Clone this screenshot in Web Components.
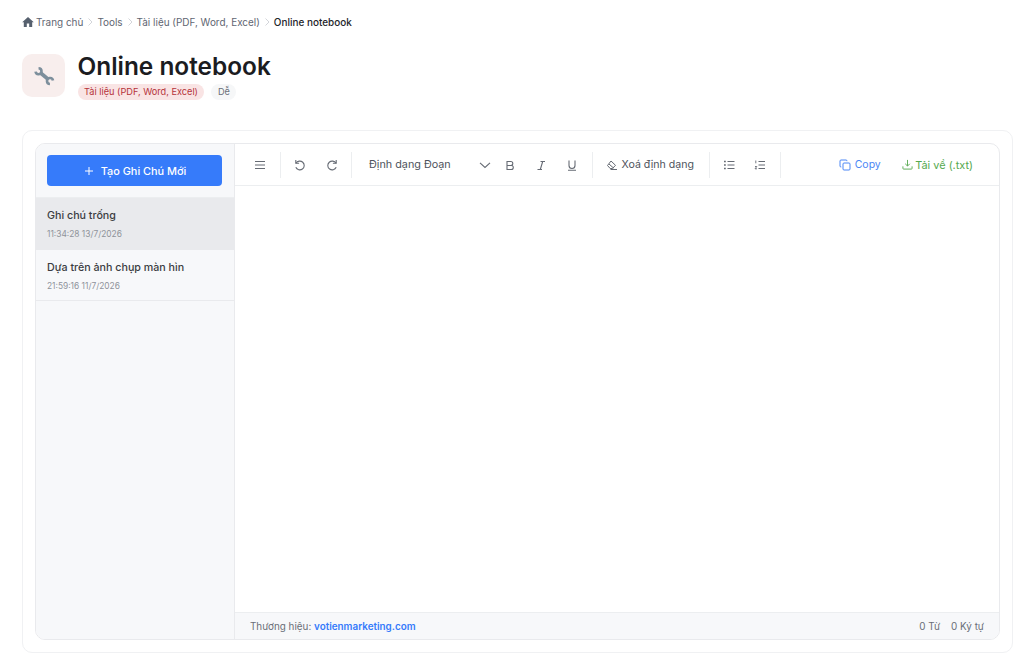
<!DOCTYPE html>
<html lang="vi">
<head>
<meta charset="utf-8">
<title>Online notebook</title>
<style>
  html, body { margin: 0; background: #fff; }
  body { font-family: Inter, "Liberation Sans", sans-serif; color: #1f2023; height: 665px; overflow: hidden; }
</style>
</head>
<body>
<tool-page>
  <bread-crumbs slot="crumbs"></bread-crumbs>
  <tool-title slot="title" name="Online notebook" category="Tài liệu (PDF, Word, Excel)" level="Dễ"></tool-title>
  <note-app slot="app">
    <note-sidebar slot="side">
      <note-item active title="Ghi chú trống" time="11:34:28 13/7/2026"></note-item>
      <note-item title="Dựa trên ảnh chụp màn hìn" time="21:59:16 11/7/2026"></note-item>
    </note-sidebar>
    <editor-toolbar slot="bar"></editor-toolbar>
    <editor-footer slot="foot"></editor-footer>
  </note-app>
</tool-page>

<script>
class ToolPage extends HTMLElement {
    constructor() {
        super();
        this.attachShadow({ mode: "open" });
        this.shadowRoot.innerHTML = `
        <style>
            :host { display: flex; flex-direction: column; padding: 0 11px 0 22px; }
            .crumbs { height: 44px; display: flex; align-items: center; }
            .title { height: 86px; }
            .card { border: 1px solid #f0f1f3; border-radius: 10px; padding: 12px; height: 497px; }
        </style>
        <div class="crumbs"><slot name="crumbs"></slot></div>
        <div class="title"><slot name="title"></slot></div>
        <div class="card"><slot name="app"></slot></div>
        `;
    }
}

class BreadCrumbs extends HTMLElement {
    constructor() {
        super();
        this.attachShadow({ mode: "open" });
        const chev = `<svg class="chev" width="12" height="12" viewBox="0 0 12 12" fill="none" stroke="#d3d5da" stroke-width="1"><path d="M4.500 2.500 8 6l-3.500 3.500"/></svg>`;
        this.shadowRoot.innerHTML = `
        <style>
            :host { display: flex; align-items: center; font-size: 9.950px; color: #5f6672; white-space: nowrap; }
            svg { display: block; flex: none; }
            .home { margin-right: 2px; }
            .chev { margin: 0 1px; }
            b { font-weight: 500; color: #23252a; }
        </style>
        <svg class="home" width="12" height="12" viewBox="0 0 12 12" fill="#56606e"><path d="M6 .9.2 6.200h1.600V11h3V7.600h2.400V11h3V6.200h1.600z"/></svg>
        <span>Trang chủ</span>${chev}<span>Tools</span>${chev}<span>Tài liệu (PDF, Word, Excel)</span>${chev}<b>Online notebook</b>
        `;
    }
}

class ToolTitle extends HTMLElement {
    constructor() {
        super();
        this.attachShadow({ mode: "open" });
        this.shadowRoot.innerHTML = `
        <style>
            :host { display: flex; gap: 12.500px; padding-top: 10px; }
            .icon { width: 43px; height: 43px; border-radius: 10px; background: #f8eeed; display: flex; align-items: center; justify-content: center; }
            h1 { margin: 0; font-size: 24.400px; line-height: 28px; font-weight: 600; color: #1b1c1f; margin-top: -2px; }
            .tags { display: flex; gap: 7px; margin-top: 4px; }
            .tag { font-size: 9.200px; line-height: 16px; padding: 0 6.500px; border-radius: 8px; }
            .cat { background: #f9e4e4; color: #b5333a; }
            .lvl { background: #f6f7f8; color: #6a6f78; }
        </style>
        <div class="icon">
            <svg width="22" height="22" viewBox="0 0 22 22" fill="none" stroke="#7d8f9c">
                <path d="M7 7.500 15.500 14.500" stroke-width="3.600"/>
                <path d="M5.550 3.200A3 3 0 1 1 2.540 6.670" stroke-width="2.600"/>
                <path d="M16.950 19A3 3 0 1 1 19.960 15.530" stroke-width="2.600"/>
            </svg>
        </div>
        <div>
            <h1>${this.getAttribute("name")}</h1>
            <div class="tags">
                <span class="tag cat">${this.getAttribute("category")}</span>
                <span class="tag lvl">${this.getAttribute("level")}</span>
            </div>
        </div>
        `;
    }
}

class NoteApp extends HTMLElement {
    constructor() {
        super();
        this.attachShadow({ mode: "open" });
        this.shadowRoot.innerHTML = `
        <style>
            :host { display: grid; grid-template-columns: 199px 1fr; grid-template-rows: 42px 1fr 27px; height: 497px; box-sizing: border-box; border: 1px solid #e9eaed; border-radius: 10px; overflow: hidden; }
            .side { grid-row: 1 / 4; background: #f7f8fa; border-right: 1px solid #e9eaed; min-height: 0; }
            .bar { border-bottom: 1px solid #eceef0; min-width: 0; }
        </style>
        <div class="side"><slot name="side"></slot></div>
        <div class="bar"><slot name="bar"></slot></div>
        <div></div>
        <div><slot name="foot"></slot></div>
        `;
    }
}

class NoteSidebar extends HTMLElement {
    constructor() {
        super();
        this.attachShadow({ mode: "open" });
        this.shadowRoot.innerHTML = `
        <style>
            :host { display: block; }
            .top { padding: 11px 12px 11px 11px; border-bottom: 1px solid #eceef0; }
            button { display: flex; align-items: center; justify-content: center; gap: 6px; width: 100%; height: 31px; border: 0; border-radius: 4px; background: #367bfa; color: #fff; font: 500 10.900px Inter, sans-serif; }
            svg { display: block; }
        </style>
        <div class="top">
            <button><svg width="12" height="12" viewBox="0 0 12 12" fill="none" stroke="#fff" stroke-width="1"><path d="M6 2v8M2 6h8"/></svg>Tạo Ghi Chú Mới</button>
        </div>
        <slot></slot>
        `;
    }
}

class NoteItem extends HTMLElement {
    constructor() {
        super();
        this.attachShadow({ mode: "open" });
        this.shadowRoot.innerHTML = `
        <style>
            :host { display: block; height: 51px; box-sizing: border-box; padding: 10px 11px 0; border-bottom: 1px solid #e9eaed; overflow: hidden; white-space: nowrap; }
            :host([active]) { background: #e9eaed; height: 52px; }
            .t { font-size: 10.700px; line-height: 15px; font-weight: 500; color: #3a3c41; }
            .d { font-size: 8.400px; line-height: 12px; color: #8f939a; margin-top: 5px; }
        </style>
        <div class="t">${this.getAttribute("title")}</div>
        <div class="d">${this.getAttribute("time")}</div>
        `;
    }
}

class EditorToolbar extends HTMLElement {
    constructor() {
        super();
        this.attachShadow({ mode: "open" });
        const ic = (d, cls = "") => `<span class="btn ${cls}"><svg width="14" height="14" viewBox="0 0 14 14" fill="none" stroke="#666b74" stroke-width="1.100">${d}</svg></span>`;
        this.shadowRoot.innerHTML = `
        <style>
            :host { display: flex; align-items: center; height: 41px; padding: 0 0 0 9px; font-size: 10.600px; color: #4e535c; white-space: nowrap; }
            .btn { display: flex; align-items: center; justify-content: center; width: 32px; height: 26px; flex: none; }
            .btn.n { width: 31px; }
            svg { display: block; flex: none; }
            .sep { width: 1px; height: 26px; background: #eceef0; flex: none; margin: 0 3px; }
            .sep.w { margin-left: 4px; }
            .select { display: flex; align-items: center; justify-content: space-between; width: 139.500px; padding: 0 2.500px 0 14px; box-sizing: border-box; flex: none; font-size: 10.800px; }
            .clear { display: flex; align-items: center; gap: 4px; padding: 0 12px 0 10px; flex: none; }
            .right { margin-left: auto; display: flex; align-items: center; gap: 21px; padding-right: 26px; font-size: 10.900px; }
            .act { display: flex; align-items: center; gap: 4px; }
            .blue { color: #4b86f5; font-size: 10.500px; }
            .green { color: #55a94f; gap: 2.500px; }
        </style>
        ${ic('<path d="M2 3.500h10M2 7h10M2 10.500h10"/>')}
        <span class="sep w"></span>
        ${ic('<path d="M2.800 2v3.300h3.300"/><path d="M3 5.300A4.400 4.400 0 1 1 2.800 9.300"/>')}
        ${ic('<path d="M11.200 2v3.300H7.900"/><path d="M11 5.300A4.400 4.400 0 1 0 11.200 9.300"/>')}
        <span class="sep"></span>
        <div class="select"><span>Định dạng Đoạn</span><svg width="14" height="14" viewBox="0 0 14 14" fill="none" stroke="#666b74" stroke-width="1.100"><path d="M2 4.800 7 9.500l5-4.700"/></svg></div>
        ${ic('<path d="M4 3.500h3.800a2 2 0 0 1 0 4H4zM4 7.500h4.300a2 2 0 0 1 0 4H4z"/>', "n")}
        ${ic('<path d="M6.500 3.500h4.500M3.500 11.500H8M8.700 3.500l-2.400 8"/>', "n")}
        ${ic('<path d="M4 2.500v5a3 3 0 0 0 6 0v-5M3 12.300h8"/>', "n")}
        <span class="sep w"></span>
        <div class="clear"><svg width="12" height="12" viewBox="0 0 12 12" fill="none" stroke="#666b74" stroke-width="1"><path d="M5 2 9.500 6.300 6.500 9.500H4.200L1.500 6.500z"/><path d="M3 5 7.500 9"/><path d="M4.500 10.500h6.500"/></svg>Xoá định dạng</div>
        <span class="sep"></span>
        ${ic('<path d="M5.500 3.500h7M5.500 7h7M5.500 10.500h7"/><path d="M2 3.500h1.800M2 7h1.800M2 10.500h1.800" stroke-width="1.600"/>')}
        ${ic('<path d="M5.500 3.500h6.500M5.500 7h6.500M5.500 10.500h6.500"/><path d="M2.800 2.500v2.800M2 8.500h1.800L2 10.800h2" stroke-width=".9"/>', "n")}
        <span class="sep w"></span>
        <div class="right">
            <span class="act blue"><svg width="12" height="12" viewBox="0 0 12 12" fill="none" stroke="#4b86f5" stroke-width="1"><rect x="4" y="4" width="7" height="7" rx="1"/><path d="M8 2.200V2a1 1 0 0 0-1-1H2a1 1 0 0 0-1 1v5a1 1 0 0 0 1 1h.300"/></svg>Copy</span>
            <span class="act green"><svg width="11" height="11" viewBox="0 0 12 12" fill="none" stroke="#55a94f" stroke-width="1"><path d="M6 1v6.500M3.500 5.200 6 7.700l2.500-2.500M1 8v2.200a.8.800 0 0 0 .8.800h8.400a.8.800 0 0 0 .8-.8V8"/></svg>Tải về (.txt)</span>
        </div>
        `;
    }
}

class EditorFooter extends HTMLElement {
    constructor() {
        super();
        this.attachShadow({ mode: "open" });
        this.shadowRoot.innerHTML = `
        <style>
            :host { display: flex; align-items: center; justify-content: space-between; height: 27px; box-sizing: border-box; padding: 0 15px 1px; background: #f7f8fa; border-top: 1px solid #eceef0; font-size: 9.900px; color: #6a6f78; white-space: nowrap; }
            a { color: #367bfa; font-weight: 600; text-decoration: none; }
            .count { display: flex; gap: 11px; }
        </style>
        <span>Thương hiệu: <a>votienmarketing.com</a></span>
        <span class="count"><span>0 Từ</span><span>0 Ký tự</span></span>
        `;
    }
}

customElements.define('tool-page', ToolPage);
customElements.define('bread-crumbs', BreadCrumbs);
customElements.define('tool-title', ToolTitle);
customElements.define('note-app', NoteApp);
customElements.define('note-sidebar', NoteSidebar);
customElements.define('note-item', NoteItem);
customElements.define('editor-toolbar', EditorToolbar);
customElements.define('editor-footer', EditorFooter);
</script>
</body>
</html>
